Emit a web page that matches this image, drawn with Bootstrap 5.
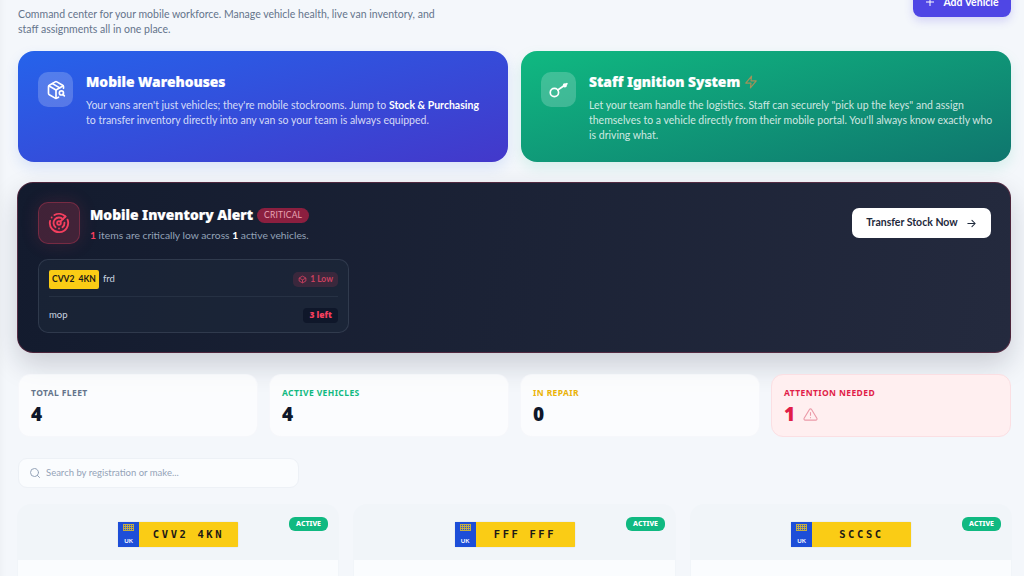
<!DOCTYPE html>
<html lang="en">
<head>
<meta charset="UTF-8">
<title>Fleet</title>
<link href="https://cdn.jsdelivr.net/npm/bootstrap@5.3.2/dist/css/bootstrap.min.css" rel="stylesheet">
<style>
html, body { height: 576px; overflow: hidden; }
body { font-family: Lato, "Noto Sans", sans-serif; background: #f4f7fb; color: #0f172a; }
.page-wrap { margin-top: -24px; padding: 0 13px 0 18px; box-shadow: inset 6px 0 6px -4px rgba(15,23,42,.03); }
.page-top { height: 68px; margin-bottom: 7px; }
.page-sub { font-size: 10.5px; line-height: 15px; color: #64748b; width: 430px; padding-top: 31px; }
.add-btn { background: #4f46e5; color: #fff; font-size: 10.5px; font-weight: 700; height: 41px; width: 98px; border: 0; border-radius: 8px; box-shadow: 0 4px 10px rgba(79,70,229,.2); padding-bottom: 6px; }
.add-btn:hover { background: #4f46e5; color: #fff; }
.promo-row { display: grid; grid-template-columns: 490px 490px; gap: 13px; margin-bottom: 20px; }
.promo { height: 111px; border-radius: 16px; padding: 21px 18px 21px 20px; display: flex; gap: 13px; color: #fff; }
.promo-blue { background: linear-gradient(165deg, #2563eb, #4338ca); box-shadow: 0 6px 14px rgba(37,99,235,.13); }
.promo-green { background: linear-gradient(165deg, #10b981, #0f766e); box-shadow: 0 6px 14px rgba(16,185,129,.13); }
.promo-icon { width: 35px; height: 35px; border-radius: 10px; background: rgba(255,255,255,.2); flex: none; display: flex; align-items: center; justify-content: center; }
.promo-title { font-family: "Noto Sans", sans-serif; font-size: 13.8px; line-height: 18px; font-weight: 900; margin: 1px 0 7px; -webkit-text-stroke: .2px #fff; }
.promo-text { font-size: 10.5px; line-height: 15px; margin: 0; color: rgba(255,255,255,.8); }
.promo-text b { color: #fff; font-weight: 700; }
.alert-panel { height: 171px; margin-bottom: 21px; margin-left: -1px; border-radius: 16px; padding: 19px 19px 19px 20px; background: linear-gradient(100deg, #131b2e, #242a3e); border: 1px solid rgba(244,63,94,.25); box-shadow: 0 12px 28px rgba(15,23,42,.18); display: flex; justify-content: space-between; align-items: flex-start; }
.alert-icon { width: 42px; height: 42px; border-radius: 10px; background: rgba(244,63,94,.2); border: 1px solid rgba(244,63,94,.3); box-shadow: 0 0 18px rgba(244,63,94,.15); flex: none; display: flex; align-items: center; justify-content: center; }
.alert-info { margin-left: 2px; }
.alert-title { font-family: "Noto Sans", sans-serif; font-size: 13.8px; line-height: 18px; font-weight: 900; color: #fff; -webkit-text-stroke: .2px #fff; }
.crit-tag { background: #8b1f3f; color: #e8a4b4; font-size: 8.5px; line-height: 15px; padding: 0 7px; border-radius: 8px; margin-left: 4px; letter-spacing: .2px; }
.alert-sub { font-size: 10.3px; line-height: 14px; color: #94a3b8; margin-top: 4px; }
.alert-sub .num-red { color: #f43f5e; font-weight: 700; }
.alert-sub .num-white { color: #fff; font-weight: 700; }
.low-list { width: 311px; height: 74px; margin-top: 15px; border: 1px solid rgba(148,163,184,.18); border-radius: 10px; background: rgba(30,41,59,.5); padding: 0 10px; }
.low-top { height: 37px; padding-top: 2px; border-bottom: 1px solid rgba(148,163,184,.1); }
.low-bot { height: 35px; padding-top: 2px; }
.mini-plate { background: #facc15; color: #1c1917; font-size: 8.5px; font-weight: 700; line-height: 19px; width: 50px; text-align: center; border-radius: 2px; white-space: pre; }
.low-name { font-size: 9.5px; color: #cbd5e1; }
.low-tag { background: rgba(244,63,94,.15); color: #c9405f; font-size: 8.5px; font-weight: 700; border-radius: 5px; height: 15px; padding: 0 5px; display: flex; align-items: center; gap: 3px; }
.left-tag { font-family: "Noto Sans", sans-serif; background: #0f172a; color: #f43f5e; font-size: 8.5px; font-weight: 900; border-radius: 4px; height: 15px; padding: 0 6px; display: flex; align-items: center; }
.transfer-btn { background: #fff; color: #1e293b; font-size: 10.5px; font-weight: 700; width: 139px; height: 30px; border-radius: 7px; border: 0; margin-top: 6px; padding: 0; }
.transfer-btn:hover { background: #fff; color: #1e293b; }
.stat-row { display: grid; grid-template-columns: repeat(4, 240px); gap: 11px; margin-bottom: 21px; }
.stat-box { height: 63px; border-radius: 12px; background: rgba(255,255,255,.65); border: 1px solid rgba(241,244,248,.6); padding: 12px; }
.stat-alert { background: #ffeff0; border-color: #fbdfe3; }
.stat-label { font-family: "Noto Sans", sans-serif; font-size: 8.5px; line-height: 12px; letter-spacing: .4px; font-weight: 700; text-transform: uppercase; }
.stat-num { font-family: "Noto Sans", sans-serif; font-size: 19px; line-height: 24px; font-weight: 900; margin-top: 3px; color: #0f172a; }
.search-box { width: 281px; height: 30px; border-radius: 9px; background: #fafcfe; border: 1px solid #edf1f6; margin-bottom: 16px; padding-left: 10px; gap: 5px; }
.search-hint { font-size: 9.5px; color: #94a3b8; }
.van-row { display: grid; grid-template-columns: 322px 323px 322px; gap: 14px; margin-left: -1px; }
.van-card { border-radius: 14px 14px 0 0; background: #f1f5f9; padding: 1px 1px 0; height: 90px; position: relative; }
.van-head { height: 55px; display: flex; justify-content: center; padding-top: 17px; }
.van-body { height: 40px; background: #fafcfe; }
.plate { width: 120px; height: 25px; display: flex; background: #facc15; border-radius: 1px; box-shadow: 0 0 1px rgba(0,0,0,.3); }
.plate-flag { width: 21px; background: #1d4ed8; color: #fff; font-size: 6px; font-weight: 700; text-align: center; display: flex; flex-direction: column; justify-content: space-between; align-items: center; padding: 2px 0; line-height: 8px; }
.plate-reg { flex: 1; text-align: center; font-family: "DejaVu Sans Mono", monospace; font-size: 10.5px; line-height: 25px; font-weight: 700; letter-spacing: 2.6px; color: #1c1917; white-space: pre; }
.active-tag { position: absolute; top: 13px; right: 11px; background: #10b981; color: #fff; font-family: "Noto Sans", sans-serif; font-size: 7px; font-weight: 800; line-height: 14px; padding: 0 7px; border-radius: 6px; }
</style>
</head>
<body>
<div class="page-wrap">
  <div class="page-top d-flex justify-content-between align-items-start">
    <div class="page-sub">Command center for your mobile workforce. Manage vehicle health, live van inventory, and staff assignments all in one place.</div>
    <button class="btn add-btn d-flex align-items-end justify-content-center gap-2" type="button">
      <svg width="10" height="10" viewBox="0 0 10 10" class="mb-1"><path d="M5 1v8M1 5h8" stroke="#fff" stroke-width="1" fill="none"/></svg>Add Vehicle
    </button>
  </div>

  <div class="promo-row">
    <div class="promo promo-blue">
      <div class="promo-icon">
        <svg width="20" height="20" viewBox="0 0 24 24" fill="none" stroke="#fff" stroke-width="2" stroke-linecap="round" stroke-linejoin="round"><path d="M21 10V8a2 2 0 0 0-1-1.73l-7-4a2 2 0 0 0-2 0l-7 4A2 2 0 0 0 3 8v8a2 2 0 0 0 1 1.73l7 4a2 2 0 0 0 2 0l2-1.14"/><path d="m7.5 4.27 9 5.15"/><path d="M3.29 7 12 12l8.71-5"/><path d="M12 22V12"/><circle cx="18.5" cy="15.5" r="2.5"/><path d="M20.27 17.27 22 19"/></svg>
      </div>
      <div>
        <div class="promo-title">Mobile Warehouses</div>
        <p class="promo-text">Your vans aren't just vehicles; they're mobile stockrooms. Jump to <b>Stock &amp; Purchasing</b><br>to transfer inventory directly into any van so your team is always equipped.</p>
      </div>
    </div>
    <div class="promo promo-green">
      <div class="promo-icon">
        <svg width="20" height="20" viewBox="0 0 24 24" fill="none" stroke="#fff" stroke-width="2" stroke-linecap="round" stroke-linejoin="round"><circle cx="6.5" cy="15" r="5"/><path d="M10.5 12 21.5 4.5"/><circle cx="19" cy="6.5" r="1.5"/></svg>
      </div>
      <div>
        <div class="promo-title d-flex align-items-center">Staff Ignition System
          <svg class="ms-1" width="14" height="14" viewBox="0 0 24 24" fill="none" stroke="#a3915a" stroke-width="2" stroke-linejoin="round"><path d="M13 2 3 14h9l-1 8 10-12h-9z"/></svg>
        </div>
        <p class="promo-text">Let your team handle the logistics. Staff can securely "pick up the keys" and assign themselves to a vehicle directly from their mobile portal. You'll always know exactly who is driving what.</p>
      </div>
    </div>
  </div>

  <div class="alert-panel">
    <div>
      <div class="d-flex gap-2">
        <div class="alert-icon">
          <svg width="22" height="22" viewBox="0 0 24 24" fill="none" stroke="#f43f5e" stroke-width="2" stroke-linecap="round" stroke-linejoin="round"><path d="M19.07 4.93A10 10 0 0 0 6.99 3.34"/><path d="M4 6h.01"/><path d="M2.29 9.62A10 10 0 1 0 21.31 8.35"/><path d="M16.24 7.76A6 6 0 1 0 8.23 16.67"/><path d="M12 18h.01"/><path d="M17.99 11.66A6 6 0 0 1 15.77 16.67"/><circle cx="12" cy="12" r="2"/><path d="m13.41 10.59 5.66-5.66"/></svg>
        </div>
        <div class="alert-info">
          <div class="d-flex align-items-center mt-1"><span class="alert-title">Mobile Inventory Alert</span><span class="crit-tag">CRITICAL</span></div>
          <div class="alert-sub"><span class="num-red">1</span> items are critically low across <span class="num-white">1</span> active vehicles.</div>
        </div>
      </div>
      <div class="low-list">
        <div class="low-top d-flex align-items-center justify-content-between">
          <div class="d-flex align-items-center gap-1"><span class="mini-plate">CVV2  4KN</span><span class="low-name">frd</span></div>
          <span class="low-tag"><svg width="9" height="9" viewBox="0 0 24 24" fill="none" stroke="#c9405f" stroke-width="2.4"><path d="M21 8 12 3 3 8v8l9 5 9-5zM3 8l9 5 9-5M12 13v8"/></svg>1 Low</span>
        </div>
        <div class="low-bot d-flex align-items-center justify-content-between">
          <span class="low-name">mop</span><span class="left-tag">3 left</span>
        </div>
      </div>
    </div>
    <button class="btn transfer-btn d-flex align-items-center justify-content-center gap-2" type="button">Transfer Stock Now
      <svg width="11" height="11" viewBox="0 0 24 24" fill="none" stroke="#1e293b" stroke-width="2.2" stroke-linecap="round" stroke-linejoin="round"><path d="M4 12h16M13 5l7 7-7 7"/></svg>
    </button>
  </div>

  <div class="stat-row">
    <div class="stat-box"><div class="stat-label" style="color:#64748b">Total Fleet</div><div class="stat-num">4</div></div>
    <div class="stat-box"><div class="stat-label" style="color:#10b981">Active Vehicles</div><div class="stat-num">4</div></div>
    <div class="stat-box"><div class="stat-label" style="color:#eab308">In Repair</div><div class="stat-num">0</div></div>
    <div class="stat-box stat-alert"><div class="stat-label" style="color:#e11d48">Attention Needed</div>
      <div class="stat-num d-flex align-items-center gap-2" style="color:#e11d48">1
        <svg width="15" height="15" viewBox="0 0 24 24" fill="none" stroke="#eb9aa8" stroke-width="1.8" stroke-linejoin="round" stroke-linecap="round"><path d="M10.3 3.9 1.8 18a2 2 0 0 0 1.7 3h17a2 2 0 0 0 1.7-3L13.7 3.9a2 2 0 0 0-3.4 0zM12 9v4M12 17h.01"/></svg>
      </div>
    </div>
  </div>

  <div class="search-box d-flex align-items-center">
    <svg width="12" height="12" viewBox="0 0 24 24" fill="none" stroke="#94a3b8" stroke-width="2" stroke-linecap="round"><circle cx="11" cy="11" r="8"/><path d="m21 21-4.3-4.3"/></svg>
    <span class="search-hint">Search by registration or make...</span>
  </div>

  <div class="van-row">
    <div class="van-card">
      <div class="van-head"><div class="plate"><div class="plate-flag"><svg width="11" height="7" viewBox="0 0 11 7" opacity=".75"><path d="M0 .5h11M0 2.5h11M0 4.5h11M0 6.5h11M.5 0v7M2.5 0v7M4.5 0v7M6.5 0v7M8.5 0v7M10.5 0v7" stroke="#facc15" stroke-width="1"/></svg>UK</div><div class="plate-reg">CVV2 4KN</div></div></div>
      <span class="active-tag">ACTIVE</span><div class="van-body"></div>
    </div>
    <div class="van-card">
      <div class="van-head"><div class="plate"><div class="plate-flag"><svg width="11" height="7" viewBox="0 0 11 7" opacity=".75"><path d="M0 .5h11M0 2.5h11M0 4.5h11M0 6.5h11M.5 0v7M2.5 0v7M4.5 0v7M6.5 0v7M8.5 0v7M10.5 0v7" stroke="#facc15" stroke-width="1"/></svg>UK</div><div class="plate-reg">FFF FFF</div></div></div>
      <span class="active-tag">ACTIVE</span><div class="van-body"></div>
    </div>
    <div class="van-card">
      <div class="van-head"><div class="plate"><div class="plate-flag"><svg width="11" height="7" viewBox="0 0 11 7" opacity=".75"><path d="M0 .5h11M0 2.5h11M0 4.5h11M0 6.5h11M.5 0v7M2.5 0v7M4.5 0v7M6.5 0v7M8.5 0v7M10.5 0v7" stroke="#facc15" stroke-width="1"/></svg>UK</div><div class="plate-reg">SCCSC</div></div></div>
      <span class="active-tag">ACTIVE</span><div class="van-body"></div>
    </div>
  </div>
</div>
<script src="https://cdn.jsdelivr.net/npm/bootstrap@5.3.2/dist/js/bootstrap.bundle.min.js"></script>
</body>
</html>
